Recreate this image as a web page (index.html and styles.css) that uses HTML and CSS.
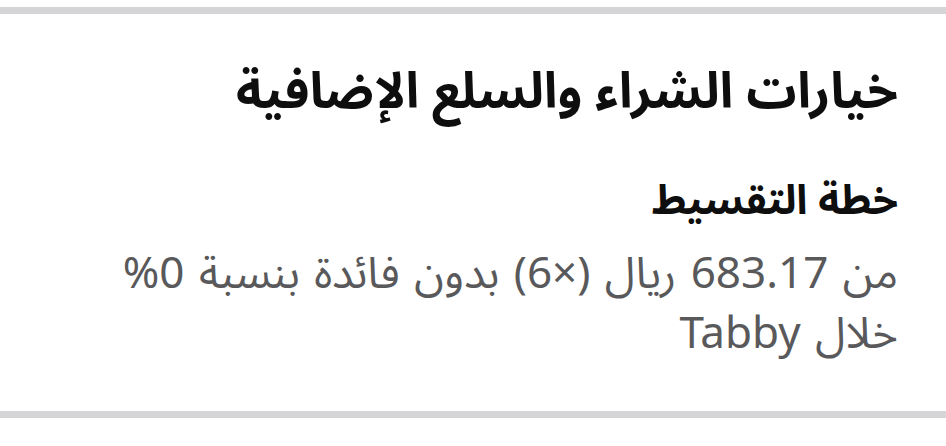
FILE: index.html
```html
<!DOCTYPE html>
<html lang="ar" dir="rtl">
<head>
  <meta charset="UTF-8">
  <title>خيارات الشراء</title>
  <link rel="stylesheet" href="styles.css">
</head>
<body>
  <div class="divider"></div>

  <section class="options">
    <h1>خيارات الشراء والسلع الإضافية</h1>

    <div class="plan">
      <h2>خطة التقسيط</h2>
      <p>من 683.17 ريال (×6) بدون فائدة بنسبة 0% خلال Tabby</p>
    </div>
  </section>

  <div class="divider"></div>
</body>
</html>
```

FILE: styles.css
```css
body {
  font-family: 'Noto Sans Arabic', 'Open Sans', sans-serif;
  background-color: #fff;
  color: #0e0e0e;
  margin: 0;
  padding-top: 7px;
}

.divider {
  height: 7px;
  background-color: #d5d5d7;
}

.options {
  padding: 46px 48px 47px;
}

.options h1 {
  margin: 0;
  font-size: 50px;
  font-weight: 700;
  line-height: 64px;
}

.plan {
  margin-top: 49px;
}

.plan h2 {
  margin: 0;
  font-size: 41px;
  font-weight: 700;
  line-height: 56px;
}

.plan p {
  max-width: 800px;
  margin: 15px 0 0;
  font-size: 44px;
  line-height: 60px;
  word-spacing: 3px;
  color: #59595b;
}
```
